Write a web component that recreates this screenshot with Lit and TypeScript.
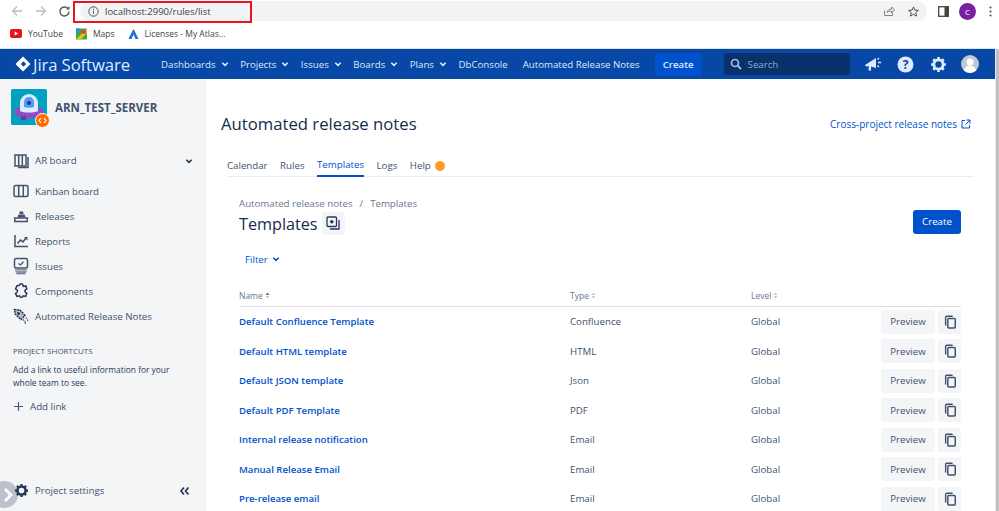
import { LitElement, html, css, svg } from "lit";
import { customElement } from "lit/decorators.js";

const chev = html`<svg class="chev" viewBox="0 0 10 10" width="10" height="10"><path d="M2.300 3.700 5 6.400 7.700 3.700" fill="none" stroke="currentColor" stroke-width="1.600"/></svg>`;
const sideIcons: Record<string, any> = {
  ar: svg`<path d="M3 3h11v11H3zM6.700 3v11M10.300 3v11" fill="none" stroke="#42526e" stroke-width="1.500"/><path d="M16 5v10.500H6" fill="none" stroke="#42526e" stroke-width="1.500"/>`,
  kanban: svg`<rect x="2" y="3.500" width="14" height="11" rx="1.500" fill="none" stroke="#42526e" stroke-width="1.500"/><path d="M6.700 3.500v11M11.300 3.500v11" stroke="#42526e" stroke-width="1.500"/>`,
  rel: svg`<path d="M2 14.500h14M3.200 14.500l-.7-3.500h13l-.7 3.500" fill="none" stroke="#42526e" stroke-width="1.400"/><path d="M5.500 10.500l.8-3h6.400l.8 3zM7.500 7V4.500h3.500l.6 2.500z" fill="#42526e"/>`,
  rep: svg`<path d="M3 3v11.500h13" fill="none" stroke="#42526e" stroke-width="1.500"/><path d="M5.500 11.500 8.500 8l2.500 1.800 3-3.800" fill="none" stroke="#42526e" stroke-width="1.600"/><path d="M12 5h3.500v3.500z" fill="#42526e"/>`,
  iss: svg`<rect x="2.500" y="1.500" width="13" height="9.500" rx="1.500" fill="none" stroke="#42526e" stroke-width="1.500"/><path d="M6.500 6.500 8.500 8 11.500 4.800" fill="none" stroke="#42526e" stroke-width="1.300"/><path d="M3 12.800h12M3.500 14.800h11M4.500 16.500h9" stroke="#6b778c" stroke-width="1.300"/>`,
  comp: svg`<path d="M7.500 3.200c.5-1.800 3-1.800 3.500 0l.3 1.200 2.500-.5 1 3-1.200.8c-1 .8-1 2 0 2.700l1.200.8-1.200 3.200-2.300-.6c-.5 2-3.200 2.200-3.800 0l-2.500.6-1.500-3 1.300-.9c1-.8 1-2 0-2.700L3.600 6.900 4.800 3.900z" fill="none" stroke="#253858" stroke-width="1.500"/>`,
  arn: svg`<path d="M2.500 2.500l5.500.5 5 5.500-4 4-6-5.500z" fill="#42526e" opacity=".35"/><path d="M2.500 2.500l5.500.5 5 5.500-4 4-6-5.500z" fill="none" stroke="#253858" stroke-width="1.500" stroke-dasharray="2 .8"/><circle cx="6.500" cy="6.500" r="1.400" fill="#253858"/><path d="M11 12.500l2.500 2.500M14 10.500l2.500 4M12.500 16l2 .5" stroke="#42526e" stroke-width="1.200" stroke-dasharray="1.500 .8"/>`,
};
const gear = (c: string, s: number) => html`<svg width=${s} height=${s} viewBox="0 0 24 24"><circle cx="12" cy="12" r="6.500" fill="none" stroke=${c} stroke-width="4"/><g stroke=${c} stroke-width="3.600"><path d="M12 1.500v4M12 18.500v4M1.500 12h4M18.500 12h4M4.600 4.600l2.800 2.800M16.600 16.600l2.800 2.800M4.600 19.400l2.800-2.800M16.600 7.400l2.800-2.800"/></g></svg>`;
const copy = html`<svg width="14" height="14" viewBox="0 0 16 16"><path d="M3 12V2.800C3 2 3.500 1.500 4.300 1.500H11" fill="none" stroke="#42526e" stroke-width="1.600"/><rect x="5.500" y="4" width="8.500" height="10.800" rx="1" fill="none" stroke="#42526e" stroke-width="1.700"/></svg>`;
const sort = (up = false) => html`<svg class="sort" width="5" height="7" viewBox="0 0 5 7"><path d="M.5 3 2.500.5 4.500 3z" fill=${up ? "#5e6c84" : "#c1c7d0"}/><path d="M.5 4 2.500 6.500 4.500 4z" fill="#c1c7d0"/></svg>`;

const rows = [
  ["Default Confluence Template", "Confluence"],
  ["Default HTML template", "HTML"],
  ["Default JSON template", "Json"],
  ["Default PDF Template", "PDF"],
  ["Internal release notification", "Email"],
  ["Manual Release Email", "Email"],
  ["Pre-release email", "Email"],
];

@customElement("app-root")
export class AppRoot extends LitElement {
  static styles = css`
    :host { display: flex; flex-direction: column; width: 999px; height: 511px; overflow: hidden; position: relative; background: #fff;
      font-family: "Open Sans", "Noto Sans", "Liberation Sans", sans-serif; font-size: 9.700px; color: #42526e; }
    * { box-sizing: border-box; }
    svg { flex: none; display: block; }
    .toolbar { height: 22px; display: flex; align-items: center; padding-left: 10px; position: relative; flex: none; }
    .navico { width: 14px; margin-right: 10px; }
    .omni { position: absolute; left: 73px; top: 1px; width: 179px; height: 22px; border: 2px solid #e8141f; z-index: 2; }
    .omnibar { margin-left: 9px; width: 847px; height: 20px; background: #f1f3f4; border-radius: 10px; display: flex; align-items: center; padding-left: 8px; gap: 6px; font-size: 9.500px; color: #444; }
    .omnibar .spacer { flex: 1; }
    .omnibar svg:last-child { margin-right: 8px; }
    .omnibar .share { margin-right: 7px; }
    .panel { margin-left: 11px; }
    .avatar-c { margin-left: 10px; width: 17px; height: 17px; border-radius: 50%; background: #7b1fa2; color: #fff; font-size: 8px; display: flex; align-items: center; justify-content: center; }
    .dots { margin-left: 13px; }
    .bookmarks { height: 26px; display: flex; align-items: center; padding-left: 10px; color: #444; font-size: 8.500px; flex: none; padding-bottom: 3px; }
    .bm { display: flex; align-items: center; gap: 6px; margin-right: 13px; }
    .nav { height: 31px; flex: none; background: #0747a6; display: flex; align-items: center; color: #deebff; font-size: 9.700px; margin-right: 4px; border-top: 1px solid #dfe1e6; }
    .logo { display: flex; align-items: center; gap: 2px; margin-left: 15px; width: 146px; color: #deebff; font-size: 16.700px; font-weight: 500; letter-spacing: -0.1px; }
    .menu { display: flex; align-items: center; gap: 4px; margin-right: 10.500px; }
    .menu .chev { color: #deebff; }
    .plain { margin-right: 15px; }
    .navcreate { background: #0052cc; color: #deebff; font-weight: 600; height: 23px; width: 47px; display: flex; align-items: center; justify-content: center; border-radius: 3px; }
    .search { margin-left: 22px; width: 126px; height: 22px; background: #09326c; border-radius: 3px; display: flex; align-items: center; padding-left: 6px; gap: 6px; color: #8fa8cd; }
    .navicons { display: flex; align-items: center; margin-left: 15px; }
    .scrollbar { position: absolute; right: 0; top: 49px; bottom: 0; width: 4px; background: #c1c1c1; border-left: 1px solid #e8e8e8; }
    .body { flex: 1; display: flex; min-height: 0; }
    .side { width: 206px; flex: none; background: #f4f5f7; display: flex; flex-direction: column; position: relative; }
    .proj { display: flex; align-items: center; height: 36px; margin: 10px 0 0 11px; gap: 8px; position: relative; }
    .projname { font-size: 11.500px; font-weight: 700; color: #42526e; }
    .pic { width: 36px; height: 36px; border-radius: 2px; background: #00a3bf; display: block; }
    .badge { position: absolute; left: 24px; top: 24px; width: 15px; height: 15px; border-radius: 50%; background: #ff6a00; border: 1px solid #fff; }
    .sitem { display: flex; align-items: center; height: 25px; padding-left: 12px; gap: 5px; color: #42526e; }
    .sitem.first { margin-top: 23px; margin-bottom: 5.500px; }
    .sitem .grow { flex: 1; }
    .sitem .chev { margin-right: 12px; color: #253858; }
    .shead { margin: 16.500px 0 0 13px; font-size: 8px; color: #42526e; font-weight: 500; }
    .sdesc { margin: 8px 16px 0 13px; font-size: 8.400px; line-height: 12.500px; color: #253858; }
    .addlink { display: flex; align-items: center; gap: 7px; margin: 10.500px 0 0 14px; }
    .settings { position: absolute; left: 14px; right: 16px; top: 404px; display: flex; align-items: center; gap: 5px; }
    .settings .grow { flex: 1; }
    .handle { position: absolute; left: -9px; top: 402px; width: 27px; height: 27px; border-radius: 50%; background: #b3b9c4; opacity: .85; display: flex; align-items: center; justify-content: center; padding-left: 7px; }
    .main { flex: 1; min-width: 0; margin-right: 4px; padding: 0 21px 0 15px; display: flex; flex-direction: column; }
    .top { display: flex; align-items: center; justify-content: space-between; margin-top: 33px; height: 24px; }
    h1 { margin: 0; font-weight: 500; color: #172b4d; font-size: 16.700px; }
    .xlink { display: flex; align-items: center; gap: 4px; color: #0052cc; font-size: 10px; font-weight: 500; margin-right: 3px; }
    .tabs { display: flex; margin: 20px 0 0 6px; height: 22px; gap: 12.500px; border-bottom: 1.500px solid #ebecf0; font-weight: 500; color: #42526e; }
    .tab { height: 22px; display: flex; align-items: center; gap: 4px; padding-bottom: 2px; }
    .tab.on { color: #0052cc; border-bottom: 2px solid #0052cc; }
    .dot { width: 10px; height: 10px; border-radius: 50%; background: #ff991f; margin-top: 1px; }
    .content { margin: 0 13px 0 18px; display: flex; flex-direction: column; }
    .crumbs { margin-top: 19px; font-size: 9.700px; color: #6b778c; height: 14px; display: flex; align-items: center; }
    .crumbs span { margin: 0 7px; }
    .headrow { display: flex; align-items: center; height: 24px; margin-top: 1px; }
    .headrow h2 { margin: 1px 0 0; font-size: 16.200px; font-weight: 500; color: #172b4d; }
    .iconbtn { width: 23px; height: 23px; margin-left: 4px; background: #f4f5f7; border-radius: 3px; display: flex; align-items: center; justify-content: center; }
    .create { margin-left: auto; width: 48px; height: 24px; background: #0052cc; color: #fff; font-weight: 500; display: flex; align-items: center; justify-content: center; border-radius: 3px; margin-top: -3px; }
    .filter { display: flex; align-items: center; gap: 3px; margin: 12px 0 0 6px; height: 24px; color: #0052cc; font-weight: 500; }
    .row, .thead { display: grid; grid-template-columns: 331px 181px 1fr auto; align-items: center; }
    .thead { margin-top: 17px; height: 19px; border-bottom: 1.500px solid #dfe1e6; font-size: 8.500px; font-weight: 500; color: #6b778c; padding-bottom: 3px; }
    .thead div { display: flex; align-items: center; gap: 2px; }
    .row { height: 29.500px; }
    .row a { color: #0052cc; font-weight: 600; font-size: 9.600px; }
    .acts { display: flex; gap: 3px; }
    .btn { height: 24px; background: #f4f5f7; border-radius: 3px; display: flex; align-items: center; justify-content: center; color: #42526e; font-weight: 500; }
    .preview { width: 54px; }
    .copybtn { width: 23px; }
  `;

  render() {
    const menu = (t: string) => html`<div class="menu">${t}${chev}</div>`;
    const si = (k: string, t: string) => html`<div class="sitem"><svg width="18" height="18" viewBox="0 0 18 18">${sideIcons[k]}</svg>${t}</div>`;
    return html`
      <div class="toolbar">
        <svg class="navico" width="12" height="12" viewBox="0 0 12 12"><path d="M11 6H1.500M6 1.500 1.500 6 6 10.500" fill="none" stroke="#bfbfbf" stroke-width="1.300"/></svg>
        <svg class="navico" width="12" height="12" viewBox="0 0 12 12"><path d="M1 6h9.500M6 1.500 10.500 6 6 10.500" fill="none" stroke="#bfbfbf" stroke-width="1.300"/></svg>
        <svg width="13" height="13" viewBox="0 0 13 13"><path d="M11 6.500a4.500 4.500 0 1 1-1.300-3.200" fill="none" stroke="#555" stroke-width="1.400"/><path d="M11.500 1v3.500H8z" fill="#555"/></svg>
        <div class="omnibar">
          <svg width="11" height="11" viewBox="0 0 11 11"><circle cx="5.500" cy="5.500" r="4.700" fill="none" stroke="#555"/><path d="M5.500 4.800v3.200M5.500 2.800v1.200" stroke="#555"/></svg>
          <span>localhost:2990/rules/list</span><span class="spacer"></span>
          <svg class="share" width="12" height="12" viewBox="0 0 12 12"><path d="M1.500 5.500v5h8V8M4 7.500c.5-2.500 2.500-3.500 4.500-3.500V2l3 3-3 3V6c-2 0-3.500.300-4.500 1.500z" fill="none" stroke="#777" stroke-width=".9"/></svg>
          <svg width="11" height="11" viewBox="0 0 12 12"><path d="M6 1 7.500 4.500l3.800.3-2.900 2.500.9 3.700L6 9l-3.300 2 .9-3.700L.7 4.800l3.800-.3z" fill="none" stroke="#444" stroke-width="1"/></svg>
        </div>
        <svg class="panel" width="11" height="11" viewBox="0 0 11 11"><rect x=".7" y=".7" width="9.600" height="9.600" fill="none" stroke="#444" stroke-width="1.300"/><rect x="6.500" y="1" width="3.500" height="9" fill="#444"/></svg>
        <div class="avatar-c">C</div>
        <svg class="dots" width="3" height="11" viewBox="0 0 3 11"><circle cx="1.500" cy="1.500" r="1.100" fill="#555"/><circle cx="1.500" cy="5.500" r="1.100" fill="#555"/><circle cx="1.500" cy="9.500" r="1.100" fill="#555"/></svg>
        <div class="omni"></div>
      </div>
      <div class="bookmarks">
        <div class="bm"><svg width="12" height="9" viewBox="0 0 12 9"><rect width="12" height="9" rx="2" fill="#e8141f"/><path d="M4.700 2.500v4l3.500-2z" fill="#fff"/></svg>YouTube</div>
        <div class="bm"><svg width="11" height="12" viewBox="0 0 12 12"><rect width="12" height="12" fill="#34a853"/><path d="M0 12 12 0v5L5 12z" fill="#fbbc04"/><circle cx="8.500" cy="3.500" r="2.500" fill="#ea4335"/><path d="M0 0h5L0 5z" fill="#4285f4"/></svg>Maps</div>
        <div class="bm"><svg width="11" height="12" viewBox="0 0 11 12"><path d="M5.500 1c1.500 2.500 3 6 5 10H7.500L5.500 6.500 3.500 11H.5c2-4 3.500-7.500 5-10z" fill="#1f6fd8"/></svg>Licenses - My Atlas...</div>
      </div>
      <div class="nav">
        <div class="logo"><svg width="16" height="16" viewBox="0 0 16 16"><path d="M8 .5 15.500 8 8 15.500.5 8zM8.500 5.300 5.800 8 8.500 10.700 11.200 8z" fill="#fff" fill-rule="evenodd"/></svg>Jira Software</div>
        ${menu("Dashboards")}${menu("Projects")}${menu("Issues")}${menu("Boards")}${menu("Plans")}
        <div class="plain">DbConsole</div><div class="plain">Automated Release Notes</div>
        <div class="navcreate">Create</div>
        <div class="search"><svg width="12" height="12" viewBox="0 0 12 12"><circle cx="5" cy="5" r="3.500" fill="none" stroke="#a9bcd8" stroke-width="1.700"/><path d="M7.700 7.700 11 11" stroke="#a9bcd8" stroke-width="1.800"/></svg>Search</div>
        <div class="navicons">
          <svg width="17" height="15" viewBox="0 0 17 15"><path d="M0 8 11 1v10L6 9.500 6 14 3.500 13 3.800 9 1 9.500z" fill="#deebff"/><path d="M12.500 2.500 14 1M13 5.500h3M12.500 8.500 14 10" stroke="#deebff" stroke-width="1.300"/></svg>
          <svg style="margin-left:15px" width="17" height="17" viewBox="0 0 17 17"><circle cx="8.500" cy="8.500" r="8" fill="#deebff"/><text x="8.500" y="13" text-anchor="middle" font-size="12" font-weight="700" fill="#0747a6" font-family="Open Sans">?</text></svg>
          <span style="margin-left:16px">${gear("#deebff", 17)}</span>
          <svg style="margin-left:14px" width="18" height="18" viewBox="0 0 18 18"><circle cx="9" cy="9" r="9" fill="#c1c7d0"/><circle cx="9" cy="7" r="3.500" fill="#fff"/><path d="M2.800 15.500c1-4 3.500-5 6.200-5s5.200 1 6.200 5A9 9 0 0 1 2.800 15.500z" fill="#fff"/></svg>
        </div>
      </div>
      <div class="body">
        <aside class="side">
          <div class="proj">
            <svg class="pic" viewBox="0 0 36 36"><rect width="36" height="36" rx="2" fill="#00a3bf"/><ellipse cx="18" cy="23" rx="15" ry="6.500" fill="#8e4dc1"/><path d="M10 27h5v4h-5z" fill="#6b3aa0"/><path d="M9 22V14a9 9 0 0 1 18 0v8c-3 2-15 2-18 0z" fill="#deebff"/><path d="M13 18v-5a5 5 0 0 1 10 0v5c-2 1-8 1-10 0z" fill="#4c9aff"/><circle cx="18" cy="14" r="2" fill="#253858"/></svg>
            <div class="badge"><svg width="13" height="13" viewBox="0 0 13 13"><path d="M5 4 3 6.500 5 9M8 4l2 2.500L8 9" fill="none" stroke="#fff" stroke-width="1.200"/></svg></div>
            <div class="projname">ARN_TEST_SERVER</div>
          </div>
          <div class="sitem first"><svg width="18" height="18" viewBox="0 0 18 18">${sideIcons.ar}</svg>AR board<span class="grow"></span>${chev}</div>
          ${si("kanban", "Kanban board")}${si("rel", "Releases")}${si("rep", "Reports")}${si("iss", "Issues")}${si("comp", "Components")}${si("arn", "Automated Release Notes")}
          <div class="shead">PROJECT SHORTCUTS</div>
          <div class="sdesc">Add a link to useful information for your whole team to see.</div>
          <div class="addlink"><svg width="9" height="9" viewBox="0 0 9 9"><path d="M4.500 0v9M0 4.500h9" stroke="#42526e" stroke-width="1.100"/></svg>Add link</div>
          <div class="handle"><svg width="10" height="16" viewBox="0 0 10 16"><path d="M2 2 8 8 2 14" fill="none" stroke="#fff" stroke-width="3"/></svg></div>
          <div class="settings">${gear("#253858", 15)}<span style="margin-left:1px">Project settings</span><span class="grow"></span>
            <svg width="11" height="10" viewBox="0 0 11 10"><path d="M5 1.500 2 5 5 8.500M9.500 1.500 6.500 5 9.500 8.500" fill="none" stroke="#253858" stroke-width="1.700"/></svg></div>
        </aside>
        <main class="main">
          <div class="top"><h1>Automated release notes</h1>
            <div class="xlink">Cross-project release notes <svg width="10" height="10" viewBox="0 0 10 10"><path d="M4 1.500H1v7.500h7.500V6M5.500 1H9v3.500M9 1 4.500 5.500" fill="none" stroke="#0052cc" stroke-width="1"/></svg></div></div>
          <div class="tabs"><div class="tab">Calendar</div><div class="tab">Rules</div><div class="tab on">Templates</div><div class="tab">Logs</div><div class="tab">Help<i class="dot"></i></div></div>
          <div class="content">
            <div class="crumbs">Automated release notes<span>/</span>Templates</div>
            <div class="headrow"><h2>Templates</h2>
              <div class="iconbtn"><svg width="14" height="14" viewBox="0 0 14 14"><rect x="1" y="1" width="9.500" height="9.500" rx="1" fill="none" stroke="#253858" stroke-width="1.300"/><path d="M13 4v9H4" fill="none" stroke="#253858" stroke-width="1.300"/><circle cx="5.800" cy="5.800" r="1.800" fill="#253858"/></svg></div>
              <div class="create">Create</div></div>
            <div class="filter">Filter ${chev}</div>
            <div class="thead"><div>Name${sort(true)}</div><div>Type${sort()}</div><div>Level${sort()}</div><div></div></div>
            ${rows.map(([n, t]) => html`<div class="row"><a>${n}</a><div>${t}</div><div>Global</div><div class="acts"><div class="btn preview">Preview</div><div class="btn copybtn">${copy}</div></div></div>`)}
          </div>
        </main>
      </div>
      <div class="scrollbar"></div>
    `;
  }
}
